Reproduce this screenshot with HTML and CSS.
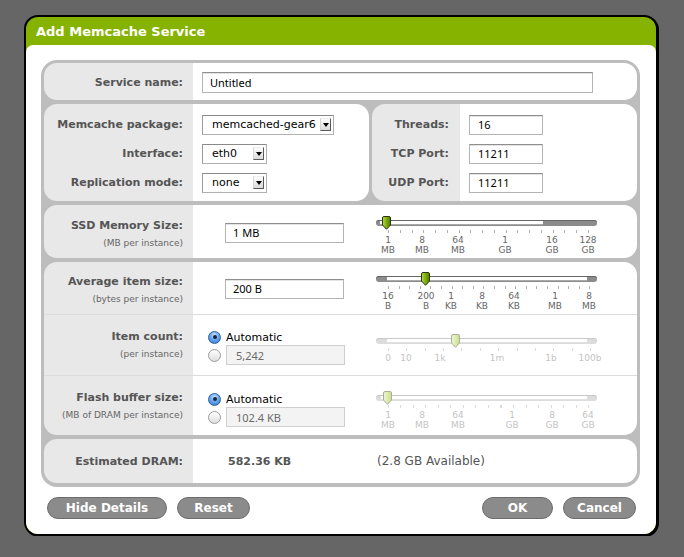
FILE: index.html
```html
<!DOCTYPE html>
<html>
<head>
<meta charset="utf-8">
<title>Add Memcache Service</title>
<link rel="stylesheet" href="styles.css">
</head>
<body>
<div class="dialog">
  <div class="titlebar">Add Memcache Service</div>
  <div class="content">
    <div class="panel">

      <div class="box box-service row">
        <div class="lbl">Service name:</div>
        <div class="field"><input class="txt txt-name" type="text" value="Untitled"></div>
      </div>

      <div class="split">
        <div class="box box-pkg">
          <div class="row">
            <div class="lbl">Memcache package:</div>
            <div class="field"><div class="select sel-pkg"><span class="sel-val">memcached-gear6</span><span class="sel-btn"></span></div></div>
          </div>
          <div class="row">
            <div class="lbl">Interface:</div>
            <div class="field"><div class="select sel-small"><span class="sel-val">eth0</span><span class="sel-btn"></span></div></div>
          </div>
          <div class="row">
            <div class="lbl">Replication mode:</div>
            <div class="field"><div class="select sel-small"><span class="sel-val">none</span><span class="sel-btn"></span></div></div>
          </div>
        </div>
        <div class="box box-net">
          <div class="row">
            <div class="lbl">Threads:</div>
            <div class="field"><input class="txt txt-port" type="text" value="16"></div>
          </div>
          <div class="row">
            <div class="lbl">TCP Port:</div>
            <div class="field"><input class="txt txt-port" type="text" value="11211"></div>
          </div>
          <div class="row">
            <div class="lbl">UDP Port:</div>
            <div class="field"><input class="txt txt-port" type="text" value="11211"></div>
          </div>
        </div>
      </div>

      <div class="box box-ssd row row-slider">
        <div class="lbl lbl-stack"><div class="lbl-main">SSD Memory Size:</div><div class="lbl-sub">(MB per instance)</div></div>
        <div class="field-slider">
          <div class="slot-input"><input class="txt txt-size" type="text" value="1 MB"></div>
          <div class="slider">
            <div class="track"><div class="range" style="left:4px; right:54px"></div></div>
            <div class="ticks ticks-ssd"></div>
            <svg class="thumb" style="left:5px" width="11" height="14" viewBox="0 0 11 14"><defs><linearGradient id="g1" x1="0" x2="1" y1="0" y2="0"><stop offset="0" stop-color="#b8dc4c"/><stop offset="0.5" stop-color="#7fae0a"/><stop offset="1" stop-color="#4f7c00"/></linearGradient></defs><path d="M1.5 2 Q1.5 0.5 3 0.5 H8 Q9.5 0.5 9.5 2 V9 L5.5 13.3 L1.5 9 Z" fill="url(#g1)" stroke="#2c3614" stroke-width="1"/></svg>
            <div class="tl" style="left:12px">1<br>MB</div>
            <div class="tl" style="left:46px">8<br>MB</div>
            <div class="tl" style="left:82px">64<br>MB</div>
            <div class="tl" style="left:129px">1<br>GB</div>
            <div class="tl" style="left:176px">16<br>GB</div>
            <div class="tl" style="left:212px">128<br>GB</div>
          </div>
        </div>
      </div>

      <div class="box box-group">
        <div class="row row-slider row-avg">
          <div class="lbl lbl-stack"><div class="lbl-main">Average item size:</div><div class="lbl-sub">(bytes per instance)</div></div>
          <div class="field-slider">
            <div class="slot-input"><input class="txt txt-size" type="text" value="200 B"></div>
            <div class="slider">
              <div class="track"><div class="range" style="left:11px; right:10px"></div></div>
              <div class="ticks ticks-avg"></div>
              <svg class="thumb" style="left:44px" width="11" height="14" viewBox="0 0 11 14"><defs><linearGradient id="g2" x1="0" x2="1" y1="0" y2="0"><stop offset="0" stop-color="#b8dc4c"/><stop offset="0.5" stop-color="#7fae0a"/><stop offset="1" stop-color="#4f7c00"/></linearGradient></defs><path d="M1.5 2 Q1.5 0.5 3 0.5 H8 Q9.5 0.5 9.5 2 V9 L5.5 13.3 L1.5 9 Z" fill="url(#g2)" stroke="#2c3614" stroke-width="1"/></svg>
              <div class="tl" style="left:12px">16<br>B</div>
              <div class="tl" style="left:50px">200<br>B</div>
              <div class="tl" style="left:75px">1<br>KB</div>
              <div class="tl" style="left:106px">8<br>KB</div>
              <div class="tl" style="left:138px">64<br>KB</div>
              <div class="tl" style="left:179px">1<br>MB</div>
              <div class="tl" style="left:213px">8<br>MB</div>
            </div>
          </div>
        </div>

        <div class="row row-slider row-count">
          <div class="lbl lbl-stack"><div class="lbl-main">Item count:</div><div class="lbl-sub">(per instance)</div></div>
          <div class="field-slider">
            <div class="slot-options">
              <div class="opt opt-auto"><span class="radio radio-on"></span><span class="opt-text">Automatic</span></div>
              <div class="opt"><span class="radio"></span><input class="txt txt-size txt-off" type="text" value="5,242" disabled></div>
            </div>
            <div class="slider slider-off">
              <div class="track"><div class="range" style="left:11px; right:10px"></div></div>
              <div class="ticks ticks-count"></div>
              <svg class="thumb" style="left:74px" width="11" height="14" viewBox="0 0 11 14"><defs><linearGradient id="g3" x1="0" x2="1" y1="0" y2="0"><stop offset="0" stop-color="#eef6d2"/><stop offset="1" stop-color="#c9df8c"/></linearGradient></defs><path d="M1.5 2 Q1.5 0.5 3 0.5 H8 Q9.5 0.5 9.5 2 V9 L5.5 13.3 L1.5 9 Z" fill="url(#g3)" stroke="#a9ad9c" stroke-width="1"/></svg>
              <div class="tl" style="left:12px">0</div>
              <div class="tl" style="left:30px">10</div>
              <div class="tl" style="left:64px">1k</div>
              <div class="tl" style="left:121px">1m</div>
              <div class="tl" style="left:175px">1b</div>
              <div class="tl" style="left:214px">100b</div>
            </div>
          </div>
        </div>

        <div class="row row-slider row-flash">
          <div class="lbl lbl-stack"><div class="lbl-main">Flash buffer size:</div><div class="lbl-sub">(MB of DRAM per instance)</div></div>
          <div class="field-slider">
            <div class="slot-options">
              <div class="opt opt-auto"><span class="radio radio-on"></span><span class="opt-text">Automatic</span></div>
              <div class="opt"><span class="radio"></span><input class="txt txt-size txt-off" type="text" value="102.4 KB" disabled></div>
            </div>
            <div class="slider slider-off">
              <div class="track"><div class="range" style="left:5px; right:10px"></div></div>
              <div class="ticks ticks-flash"></div>
              <svg class="thumb" style="left:6px" width="11" height="14" viewBox="0 0 11 14"><defs><linearGradient id="g4" x1="0" x2="1" y1="0" y2="0"><stop offset="0" stop-color="#eef6d2"/><stop offset="1" stop-color="#c9df8c"/></linearGradient></defs><path d="M1.5 2 Q1.5 0.5 3 0.5 H8 Q9.5 0.5 9.5 2 V9 L5.5 13.3 L1.5 9 Z" fill="url(#g4)" stroke="#a9ad9c" stroke-width="1"/></svg>
              <div class="tl" style="left:12px">1<br>MB</div>
              <div class="tl" style="left:46px">8<br>MB</div>
              <div class="tl" style="left:82px">64<br>MB</div>
              <div class="tl" style="left:136px">1<br>GB</div>
              <div class="tl" style="left:176px">8<br>GB</div>
              <div class="tl" style="left:212px">64<br>GB</div>
            </div>
          </div>
        </div>
      </div>

      <div class="box box-dram row">
        <div class="lbl">Estimated DRAM:</div>
        <div class="field-dram">
          <div class="dram-val">582.36 KB</div>
          <div class="dram-avail">(2.8 GB Available)</div>
        </div>
      </div>

    </div>
    <div class="footer">
      <div class="btn-group">
        <button class="btn btn-hide">Hide Details</button>
        <button class="btn btn-reset">Reset</button>
      </div>
      <div class="btn-group">
        <button class="btn btn-ok">OK</button>
        <button class="btn btn-cancel">Cancel</button>
      </div>
    </div>
  </div>
</div>
</body>
</html>
```

FILE: styles.css
```css
* { box-sizing: border-box; }

body {
  margin: 0;
  background: #666666;
  font-family: "DejaVu Sans", Verdana, sans-serif;
}

.dialog {
  margin: 15px 0 0 24px;
  width: 634px;
  border: 2px solid #000;
  border-radius: 14px;
  background: #86b300;
  overflow: hidden;
  box-shadow: 1px 1px 0 #000;
}

.titlebar {
  height: 28px;
  padding: 2px 0 0 10px;
  line-height: 26px;
  color: #fff;
  font-weight: bold;
  font-size: 13px;
}

.content {
  background: #fff;
  border-radius: 7px 7px 0 0;
  padding: 15px 16px 15px 15px;
}

.panel {
  background: #bdbdbd;
  border-radius: 16px;
  padding: 3px 3px 4px 3px;
  display: flex;
  flex-direction: column;
  gap: 4px;
}

.box {
  background: linear-gradient(to right, #e8e8e8 149px, #fff 149px);
  border-radius: 13px;
  overflow: hidden;
}

.row {
  display: grid;
  grid-template-columns: 149px 1fr;
  align-items: center;
}

.lbl {
  text-align: right;
  padding-right: 10px;
  font-weight: bold;
  font-size: 11px;
  color: #555;
  white-space: nowrap;
}

.lbl-main { line-height: 16px; }

.lbl-sub {
  font-weight: normal;
  font-size: 9px;
  line-height: 16px;
  margin-top: 1px;
  color: #666;
}

.field {
  padding-left: 9px;
  display: flex;
  align-items: center;
}

/* service name */
.box-service { height: 37px; padding-top: 1px; }

/* split section */
.split {
  display: grid;
  grid-template-columns: 325px 1fr;
  gap: 3px;
}

.box-pkg, .box-net {
  height: 97px;
  padding-top: 6px;
}

.box-pkg .row, .box-net .row { height: 29px; }

.box-net {
  background: linear-gradient(to right, #e8e8e8 88px, #fff 88px);
}

.box-net .row { grid-template-columns: 88px 1fr; }
.box-net .lbl { padding-right: 11px; }

/* inputs */
.txt {
  height: 20px;
  border: 1px solid #b4b4b4;
  border-top-color: #8e8e8e;
  box-shadow: inset 0 1px 0 #e4e4e4;
  background: #fff;
  color: #000;
  font-family: "Noto Sans", "DejaVu Sans", sans-serif;
  font-size: 11px;
  padding: 0 0 0 7px;
  outline: none;
  margin: 0;
}

.txt-name { width: 391px; height: 21px; }
.txt-port { width: 74px; padding-left: 8px; }
.txt-size { width: 119px; }

.txt-off {
  background: #f3f3f3;
  border-color: #cfcfcf;
  box-shadow: none;
  color: #6a6a6a;
  padding-left: 9px;
}

/* selects */
.select {
  display: flex;
  align-items: center;
  height: 20px;
  border: 1px solid #b0b0b0;
  border-top-color: #8a8a8a;
  border-left-color: #9a9a9a;
  background: #fff;
  font-size: 11px;
  color: #000;
}

.sel-pkg { width: 132px; }
.sel-small { width: 65px; }

.sel-val { flex: 1; padding-left: 9px; white-space: nowrap; }

.sel-btn {
  position: relative;
  width: 11px;
  height: 13px;
  margin-right: 2px;
  background: linear-gradient(#fdfdfd, #dadada);
  border-left: 1px solid #d6d6d6;
  border-top: 1px solid #eee;
  border-right: 1px solid #5a5a5a;
  border-bottom: 1px solid #5a5a5a;
}

.sel-btn::after {
  content: "";
  position: absolute;
  left: 2px;
  top: 4px;
  border-top: 4px solid #000;
  border-left: 3px solid transparent;
  border-right: 3px solid transparent;
}

/* slider rows */
.row-slider { align-items: start; }
.row-slider .lbl { align-self: center; }

.field-slider {
  display: grid;
  grid-template-columns: 183px 221px;
  align-items: start;
}

.slot-input { padding-left: 32px; }
.slot-options { padding-left: 15px; }

.box-ssd { height: 53px; }
.box-ssd .lbl { padding-top: 5px; }
.box-ssd .slot-input { margin-top: 17px; }
.box-ssd .slider { margin-top: 11px; }

.row-avg { height: 52px; }
.row-avg .lbl { padding-top: 4px; }
.row-avg .slot-input { margin-top: 16px; }
.row-avg .slider { margin-top: 10px; }

.row-count {
  height: 61px;
  border-top: 1px solid #dcdcdc;
}
.row-count .slot-options { margin-top: 14px; }
.row-count .slider { margin-top: 19px; }

.row-flash {
  height: 60px;
  border-top: 1px solid #dcdcdc;
}
.row-flash .lbl { padding-top: 2px; }
.row-flash .slot-options { margin-top: 15px; }
.row-flash .slider { margin-top: 15px; }

/* radio options */
.opt {
  display: flex;
  align-items: center;
  gap: 5px;
  height: 16px;
}

.opt + .opt { height: 20px; }

.opt-text {
  font-size: 11px;
  color: #000;
}

.radio {
  position: relative;
  width: 13px;
  height: 13px;
  border-radius: 50%;
  border: 1px solid #9c9c9c;
  background: linear-gradient(#ffffff, #dedede);
  flex: none;
}

.radio-on {
  border-color: #2f5f9c;
  background: radial-gradient(circle at 50% 30%, #cfe6ff 0, #6aa8ee 45%, #2f74cc 100%);
}

.radio-on::after {
  content: "";
  position: absolute;
  left: 3.5px;
  top: 3.5px;
  width: 4px;
  height: 4px;
  border-radius: 50%;
  background: #15253a;
}

/* slider */
.slider {
  position: relative;
  width: 221px;
  height: 39px;
}

.track {
  position: absolute;
  left: 0;
  right: 0;
  top: 4px;
  height: 6px;
  border-radius: 3px;
  background: #8c8c8c;
  box-shadow: inset 0 1px 0 #666;
}

.range {
  position: absolute;
  top: 1px;
  height: 4px;
  background: #fff;
  border-bottom: 1px solid #aaa;
}

.ticks {
  position: absolute;
  left: 12px;
  top: 14px;
  height: 3px;
}

.ticks-ssd {
  width: 201px;
  background: repeating-linear-gradient(to right, #b0b0b0 0 1px, transparent 1px 11.76px);
}

.ticks-avg {
  width: 202px;
  background: repeating-linear-gradient(to right, #b0b0b0 0 1px, transparent 1px 10.6px);
}

.ticks-count {
  width: 203px;
  background: repeating-linear-gradient(to right, #dadada 0 1px, transparent 1px 18.36px);
}

.ticks-flash {
  width: 201px;
  background: repeating-linear-gradient(to right, #dadada 0 1px, transparent 1px 12.5px);
}

.thumb {
  position: absolute;
  top: 0;
  display: block;
}

.tl {
  position: absolute;
  top: 19px;
  transform: translateX(-50%);
  text-align: center;
  font-size: 9px;
  line-height: 10px;
  color: #666;
  white-space: nowrap;
}

.slider-off .track {
  background: #dcdcdc;
  box-shadow: inset 0 1px 0 #c8c8c8;
}

.slider-off .range {
  border-bottom-color: #e2e2e2;
}

.slider-off .tl { color: #c4c4c4; }

/* DRAM */
.box-dram { height: 44px; }

.field-dram {
  display: grid;
  grid-template-columns: 183px 1fr;
  align-items: center;
}

.dram-val {
  padding-left: 35px;
  font-weight: bold;
  font-size: 11px;
  color: #555;
}

.dram-avail {
  padding-left: 1px;
  font-size: 12px;
  color: #555;
}

/* footer */
.footer {
  display: flex;
  justify-content: space-between;
  padding: 10px 4px 0 6px;
}

.btn-group {
  display: flex;
  gap: 10px;
}

.btn {
  height: 22px;
  border: 1px solid #6c6c6c;
  border-radius: 11px;
  background: #8b8b8b;
  color: #fff;
  font-family: "DejaVu Sans", Verdana, sans-serif;
  font-weight: bold;
  font-size: 12px;
  padding: 0;
  margin: 0;
}

.btn-hide { width: 120px; }
.btn-reset { width: 73px; }
.btn-ok { width: 71px; }
.btn-cancel { width: 73px; }
```
